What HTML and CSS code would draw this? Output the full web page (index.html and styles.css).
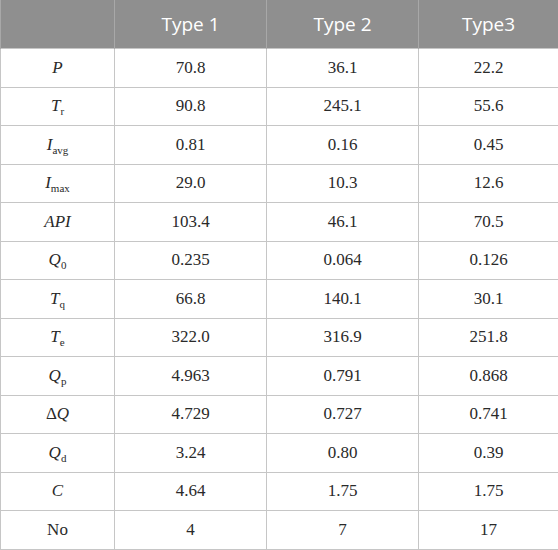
FILE: index.html
```html
<!DOCTYPE html>
<html>
<head>
<meta charset="utf-8">
<link rel="stylesheet" href="styles.css">
</head>
<body>
<table class="data">
  <colgroup>
    <col class="c0"><col class="c1"><col class="c2"><col class="c3">
  </colgroup>
  <thead>
    <tr class="head"><th></th><th>Type 1</th><th>Type 2</th><th>Type3</th></tr>
  </thead>
  <tbody>
    <tr><td><i>P</i></td><td>70.8</td><td>36.1</td><td>22.2</td></tr>
    <tr><td><i>T</i><sub>r</sub></td><td>90.8</td><td>245.1</td><td>55.6</td></tr>
    <tr><td><i>I</i><sub>avg</sub></td><td>0.81</td><td>0.16</td><td>0.45</td></tr>
    <tr><td><i>I</i><sub>max</sub></td><td>29.0</td><td>10.3</td><td>12.6</td></tr>
    <tr><td><i>API</i></td><td>103.4</td><td>46.1</td><td>70.5</td></tr>
    <tr><td><i>Q</i><sub>0</sub></td><td>0.235</td><td>0.064</td><td>0.126</td></tr>
    <tr><td><i>T</i><sub>q</sub></td><td>66.8</td><td>140.1</td><td>30.1</td></tr>
    <tr><td><i>T</i><sub>e</sub></td><td>322.0</td><td>316.9</td><td>251.8</td></tr>
    <tr><td><i>Q</i><sub>p</sub></td><td>4.963</td><td>0.791</td><td>0.868</td></tr>
    <tr><td>Δ<i>Q</i></td><td>4.729</td><td>0.727</td><td>0.741</td></tr>
    <tr><td><i>Q</i><sub>d</sub></td><td>3.24</td><td>0.80</td><td>0.39</td></tr>
    <tr><td><i>C</i></td><td>4.64</td><td>1.75</td><td>1.75</td></tr>
    <tr><td>No</td><td>4</td><td>7</td><td>17</td></tr>
  </tbody>
</table>
</body>
</html>
```
FILE: styles.css
```css
html, body {
  margin: 0;
  padding: 0;
  background: #ffffff;
}
.data {
  width: 558px;
  border-collapse: collapse;
  table-layout: fixed;
  font-family: "Liberation Serif", serif;
  font-size: 17px;
  color: #2a2a2a;
}
.c0 { width: 114px; }
.c1 { width: 152px; }
.c2 { width: 152px; }
.c3 { width: 140px; }
.head th {
  height: 48px;
  padding: 0;
  background: #8f8f8f;
  color: #ffffff;
  font-family: "Open Sans", "Noto Sans", sans-serif;
  font-weight: normal;
  font-size: 19px;
  text-align: center;
  border-left: 1px solid #a8a8a8;
  border-right: 1px solid #a8a8a8;
}
.data td {
  height: 37.5px;
  padding: 0;
  text-align: center;
  font-family: "Liberation Serif", serif;
  border: 1px solid #c6c6c6;
}
.data sub {
  font-size: 11px;
  vertical-align: -4px;
  line-height: 0;
}
```
